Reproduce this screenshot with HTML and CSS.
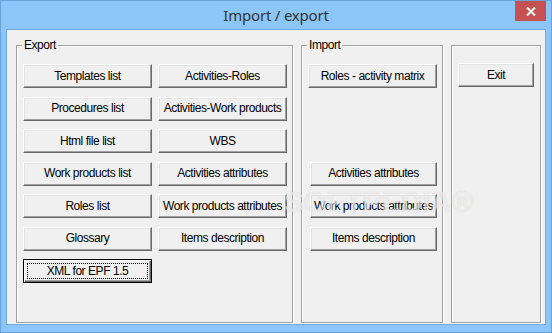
FILE: index.html
```html
<!DOCTYPE html>
<html lang="en">
<head>
<meta charset="UTF-8">
<title>Import / export</title>
<link rel="stylesheet" href="styles.css">
</head>
<body>
<div class="window">
    <div class="titlebar">
        <span></span>
        <span class="title">Import / export</span>
        <span class="close">
            <svg width="10" height="9" viewBox="0 0 10 9">
                <path d="M 1 0.5 L 9 8.5 M 9 0.5 L 1 8.5" stroke="#fff" stroke-width="2"/>
            </svg>
        </span>
    </div>
    <div class="client">
        <fieldset class="group export">
            <legend>Export</legend>
            <div class="rows two">
                <div class="button">Templates list</div>
                <div class="button">Activities-Roles</div>
                <div class="button">Procedures list</div>
                <div class="button">Activities-Work products</div>
                <div class="button">Html file list</div>
                <div class="button">WBS</div>
                <div class="button">Work products list</div>
                <div class="button">Activities attributes</div>
                <div class="button">Roles list</div>
                <div class="button">Work products attributes</div>
                <div class="button">Glossary</div>
                <div class="button">Items description</div>
                <div class="button default"><span class="focus">XML for EPF 1.5</span></div>
            </div>
        </fieldset>
        <fieldset class="group import">
            <legend>Import</legend>
            <div class="rows">
                <div class="button r1">Roles - activity matrix</div>
                <div class="button shift r4">Activities attributes</div>
                <div class="button shift r5">Work products attributes</div>
                <div class="button shift r6">Items description</div>
            </div>
        </fieldset>
        <fieldset class="group side">
            <div class="rows">
                <div class="button exit">Exit</div>
            </div>
        </fieldset>
    </div>
</div>
</body>
</html>
```

FILE: styles.css
```css
body, html {
    margin: 0;
    padding: 0;
    background: #8cc6f8;
}
.window {
    box-sizing: border-box;
    width: 552px;
    height: 333px;
    background: #8cc6f8;
    border: 1px solid #6aa3da;
    padding: 0 5px 7px 5px;
    display: flex;
    flex-direction: column;
}
.titlebar {
    height: 28px;
    display: grid;
    grid-template-columns: 1fr auto 1fr;
}
.title {
    line-height: 29px;
    font-family: "Noto Sans", sans-serif;
    font-size: 15px;
    color: #333;
    letter-spacing: -0.2px;
}
.close {
    justify-self: end;
    width: 31px;
    height: 20px;
    background: #c75050;
    display: flex;
    align-items: center;
    justify-content: center;
}
.close svg {
    display: block;
}
.client {
    position: relative;
    flex: 1;
    background: #f0f0f0;
    border: 1px solid #72a9de;
    padding: 8px 3px 1px 9px;
    display: flex;
    gap: 8px;
    font-family: "Liberation Sans", Arial, sans-serif;
    font-size: 12px;
    letter-spacing: -0.45px;
    color: #000;
}
/* softpedia watermark drawn over the buttons */
.client::after {
    content: "SOFTPEDIA\00AE";
    position: absolute;
    left: 277px;
    top: 155px;
    font-weight: bold;
    font-size: 30px;
    letter-spacing: -0.5px;
    color: rgba(255, 255, 255, 0.6);
    text-shadow: 0 0 1px rgba(0, 0, 0, 0.15);
    pointer-events: none;
}
.group {
    margin: 0;
    padding: 12px 4px 0 6px;
    border: 1px solid #a0a0a0;
    box-shadow: 1px 1px 0 #fff, inset 1px 1px 0 #fff;
    min-width: 0;
}
.group legend {
    padding: 0 2px;
    margin-left: -1px;
    line-height: 14px;
    background: #f0f0f0;
}
.export {
    width: 277px;
    box-sizing: border-box;
}
.import {
    width: 142px;
    box-sizing: border-box;
}
.side {
    width: 90px;
    box-sizing: border-box;
    margin-top: 7px;
    padding-top: 17px;
}
.rows {
    display: grid;
    grid-template-columns: 129px;
    grid-template-rows: repeat(7, 24px);
    row-gap: 8.5px;
}
.rows.two {
    grid-template-columns: 129px 129px;
    column-gap: 6px;
}
.button {
    box-sizing: border-box;
    height: 24px;
    background: #f0f0f0;
    border: 1px solid;
    border-color: #fff #696969 #696969 #fff;
    box-shadow: inset -1px -1px 0 #a0a0a0, inset 1px 1px 0 #e3e3e3;
    display: flex;
    align-items: center;
    justify-content: center;
    white-space: nowrap;
    line-height: 14px;
    padding-bottom: 1px;
}
.button.default {
    border: 1px solid #000;
    box-shadow: inset 1px 1px 0 #fff, inset -1px -1px 0 #696969, inset -2px -2px 0 #a0a0a0;
    padding: 3px;
}
.focus {
    flex: 1;
    align-self: stretch;
    border: 1px dotted #000;
    display: flex;
    align-items: center;
    justify-content: center;
}
.shift {
    margin-left: 2px;
}
.r1 { grid-row: 1; }
.r4 { grid-row: 4; }
.r5 { grid-row: 5; }
.r6 { grid-row: 6; }
.exit {
    width: 76px;
}
```
